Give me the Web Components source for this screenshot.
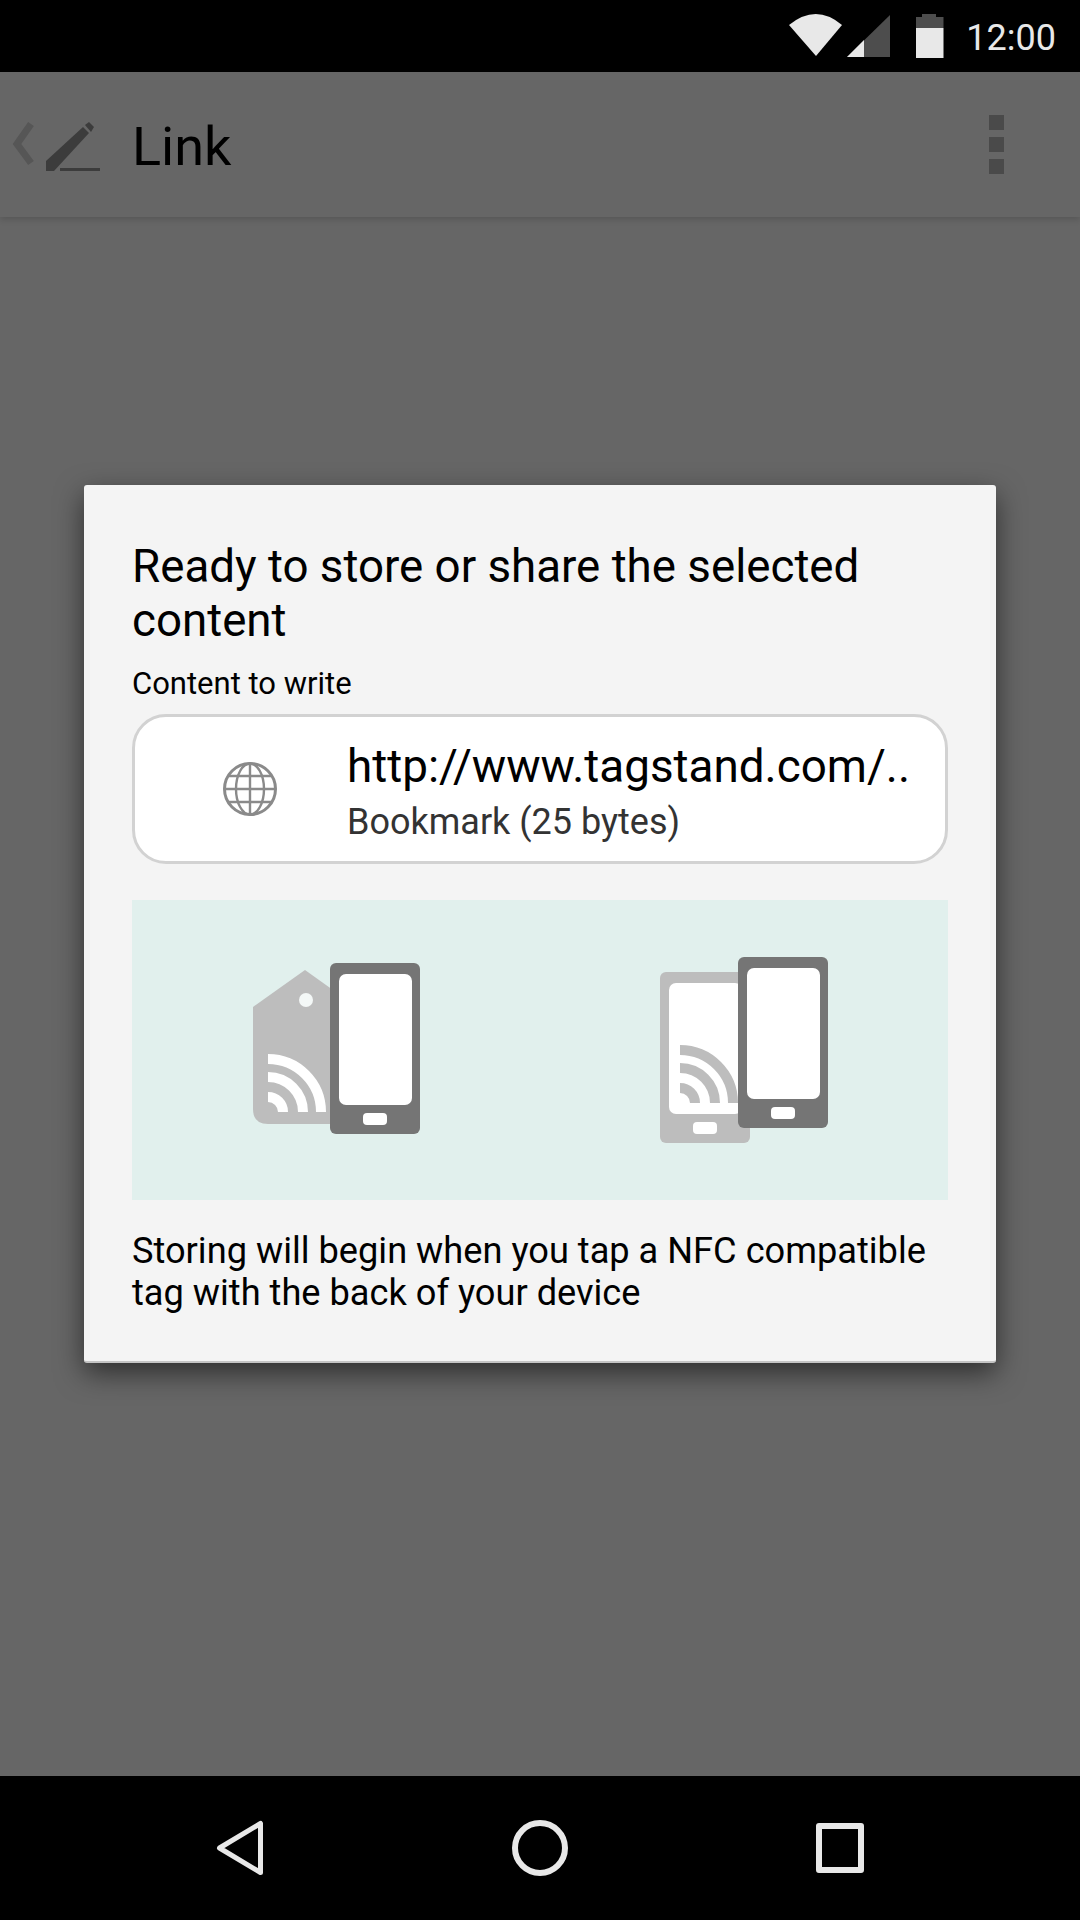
<!DOCTYPE html>
<html>
<head>
<meta charset="utf-8">
<style>
  html, body { margin: 0; background: #666; }
  body { font-family: Roboto, "Noto Sans", sans-serif; }
  phone-screen span[slot] { display: block; }
</style>
</head>
<body>
<phone-screen>
  <status-bar slot="status" time="12:00"></status-bar>
  <app-bar slot="bar" title-text="Link"></app-bar>
  <nfc-dialog slot="dialog">
    <span slot="title">Ready to store or share the selected content</span>
    <span slot="label">Content to write</span>
    <content-row slot="content" url="http://www.tagstand.com/.." meta="Bookmark (25 bytes)"></content-row>
    <tap-panel slot="panel"></tap-panel>
    <span slot="hint">Storing will begin when you tap a NFC compatible tag with the back of your device</span>
  </nfc-dialog>
  <nav-bar slot="nav"></nav-bar>
</phone-screen>

<script>
class PhoneScreen extends HTMLElement {
  constructor() {
    super();
    this.attachShadow({ mode: "open" });
    this.shadowRoot.innerHTML = `
      <style>
        :host { display: flex; flex-direction: column; position: relative; width: 1080px; height: 1920px; overflow: hidden; background: #666; }
        .body { flex: 1; }
        .scrim { position: absolute; left: 0; right: 0; top: 72px; bottom: 144px; display: flex; align-items: center; justify-content: center; }
      </style>
      <slot name="status"></slot>
      <slot name="bar"></slot>
      <div class="body"></div>
      <slot name="nav"></slot>
      <div class="scrim"><slot name="dialog"></slot></div>`;
  }
}

class StatusBar extends HTMLElement {
  constructor() {
    super();
    this.attachShadow({ mode: "open" });
  }
  connectedCallback() {
    const time = this.getAttribute("time") || "";
    this.shadowRoot.innerHTML = `
      <style>
        :host { display: flex; align-items: center; justify-content: flex-end; height: 72px; background: #000; color: #e8e8e8; padding-right: 24px; }
        svg { display: block; }
        .time { font-size: 36px; margin-left: 21px; line-height: 72px; position: relative; top: 2px; }
      </style>
      <svg width="156" height="72" viewBox="790 0 156 72">
        <path d="M790 25Q817 3 843 25L817 56Z" fill="#e8e8e8"/>
        <path d="M848 57L891 15V57Z" fill="#4d4d4d"/>
        <path d="M848 57L865 40V57Z" fill="#e8e8e8"/>
        <path d="M923 17V14H937V17H944.5V28H917V17Z" fill="#4d4d4d"/>
        <path d="M917 28H944.5V58H917Z" fill="#e8e8e8"/>
      </svg>
      <span class="time">${time}</span>`;
  }
}

class AppBar extends HTMLElement {
  constructor() {
    super();
    this.attachShadow({ mode: "open" });
  }
  connectedCallback() {
    const title = this.getAttribute("title-text") || "";
    this.shadowRoot.innerHTML = `
      <style>
        :host { display: flex; align-items: center; height: 145px; background: #666; box-shadow: 0 3px 6px rgba(0,0,0,.14); color: #000; position: relative; }
        svg { display: block; flex: none; }
        h1 { margin: 4px 0 0 28px; font-weight: 400; font-size: 54px; line-height: 145px; flex: 1; }
        .more { display: grid; gap: 7px; margin-right: 76px; }
        .more i { display: block; width: 15px; height: 15px; background: #4a4a4a; }
      </style>
      <svg width="104" height="145" viewBox="0 72 104 145">
        <path d="M31 124L17 144L31 163" fill="none" stroke="#565656" stroke-width="7"/>
        <path d="M46 171L46 161L83 127L89 133L54 171Z" fill="#3c3c3c"/>
        <path d="M85 125L89 122L94 127L91 132Z" fill="#3c3c3c"/>
        <rect x="60" y="168" width="40" height="3" fill="#3c3c3c"/>
      </svg>
      <h1>${title}</h1>
      <div class="more"><i></i><i></i><i></i></div>`;
  }
}

class NfcDialog extends HTMLElement {
  constructor() {
    super();
    this.attachShadow({ mode: "open" });
    this.shadowRoot.innerHTML = `
      <style>
        :host { display: flex; flex-direction: column; box-sizing: border-box; width: 912px; height: 878px; padding: 55px 48px 0; background: #f4f4f4; border-radius: 3px; border-bottom: 2px solid #c4c4c4; box-shadow: 0 10px 28px rgba(0,0,0,.55); color: #000; }
        .title { font-size: 45.7px; line-height: 54px; }
        .label { font-size: 31px; line-height: 36px; margin-top: 18px; }
        .content { margin-top: 12px; }
        .panel { margin-top: 36px; }
        .hint { font-size: 36.2px; line-height: 42px; margin-top: 30px; }
      </style>
      <div class="title"><slot name="title"></slot></div>
      <div class="label"><slot name="label"></slot></div>
      <div class="content"><slot name="content"></slot></div>
      <div class="panel"><slot name="panel"></slot></div>
      <div class="hint"><slot name="hint"></slot></div>`;
  }
}

class ContentRow extends HTMLElement {
  constructor() {
    super();
    this.attachShadow({ mode: "open" });
  }
  connectedCallback() {
    const url = this.getAttribute("url") || "";
    const meta = this.getAttribute("meta") || "";
    this.shadowRoot.innerHTML = `
      <style>
        :host { display: flex; align-items: center; box-sizing: border-box; height: 150px; background: #fff; border: 3px solid #d2d2d2; border-radius: 34px; }
        .icon { width: 212px; flex: none; display: flex; justify-content: center; padding-left: 18px; box-sizing: border-box; }
        svg { display: block; }
        .text { padding-top: 6px; }
        .url { font-size: 45.8px; line-height: 54px; white-space: nowrap; }
        .meta { font-size: 36px; line-height: 44px; color: #333; margin-top: 6px; }
      </style>
      <div class="icon">
        <svg width="56" height="56" viewBox="0 0 56 56" fill="none" stroke="#8a8a8a" stroke-width="2.4">
          <circle cx="28" cy="28" r="25.5" stroke-width="3"/>
          <ellipse cx="28" cy="28" rx="14" ry="25.5"/>
          <path d="M28 3V53M3 28H53M7 15H49M7 41H49"/>
        </svg>
      </div>
      <div class="text">
        <div class="url">${url}</div>
        <div class="meta">${meta}</div>
      </div>`;
  }
}

class TapPanel extends HTMLElement {
  constructor() {
    super();
    this.attachShadow({ mode: "open" });
    const arcs = (cx, cy, color) => [53, 35, 15].map(r =>
      `<path d="M${cx} ${cy - r}A${r} ${r} 0 0 1 ${cx + r} ${cy}" fill="none" stroke="${color}" stroke-width="10"/>`).join("");
    const phone = (x, y, h, fill) => `
      <rect x="${x}" y="${y}" width="90" height="${h}" rx="6" fill="${fill}"/>
      <rect x="${x + 9}" y="${y + 11}" width="73" height="${h - 40}" rx="7" fill="#fff"/>
      <rect x="${x + 33}" y="${y + h - 21}" width="24" height="12" rx="4" fill="#fff"/>`;
    this.shadowRoot.innerHTML = `
      <style>
        :host { display: grid; grid-template-columns: 1fr 1fr; height: 300px; background: #e1f0ed; }
        div { display: flex; align-items: center; justify-content: center; }
        svg { display: block; }
      </style>
      <div>
        <svg width="180" height="200" viewBox="246 950 180 200">
          <path d="M253 1007L305 970L340 995V1124H268Q253 1124 253 1109Z" fill="#bdbdbd"/>
          <circle cx="306" cy="1000" r="7" fill="#f4f8f7"/>
          ${arcs(268, 1112, "#fff")}
          ${phone(330, 963, 171, "#757575")}
        </svg>
      </div>
      <div>
        <svg width="180" height="200" viewBox="654 950 180 200">
          ${phone(660, 972, 171, "#bdbdbd")}
          ${arcs(680, 1103, "#bdbdbd")}
          ${phone(738, 957, 171, "#757575")}
        </svg>
      </div>`;
  }
}

class NavBar extends HTMLElement {
  constructor() {
    super();
    this.attachShadow({ mode: "open" });
    this.shadowRoot.innerHTML = `
      <style>
        :host { display: grid; grid-template-columns: repeat(3, 300px); padding: 0 90px; height: 144px; background: #000; }
        div { display: flex; align-items: center; justify-content: center; }
        svg { display: block; }
      </style>
      <div><svg width="60" height="144" viewBox="210 1776 60 144" fill="none" stroke="#e8e8e8" stroke-width="5" stroke-linejoin="round">
        <path d="M219.5 1848L260.5 1823.5V1872.5Z"/>
      </svg></div>
      <div><svg width="60" height="144" viewBox="510 1776 60 144" fill="none" stroke="#e8e8e8" stroke-width="6">
        <circle cx="540" cy="1848" r="25"/>
      </svg></div>
      <div><svg width="60" height="144" viewBox="810 1776 60 144" fill="none" stroke="#e8e8e8" stroke-width="6" stroke-linejoin="round">
        <rect x="819" y="1826" width="42" height="44"/>
      </svg></div>`;
  }
}

customElements.define("phone-screen", PhoneScreen);
customElements.define("status-bar", StatusBar);
customElements.define("app-bar", AppBar);
customElements.define("nfc-dialog", NfcDialog);
customElements.define("content-row", ContentRow);
customElements.define("tap-panel", TapPanel);
customElements.define("nav-bar", NavBar);
</script>
</body>
</html>
